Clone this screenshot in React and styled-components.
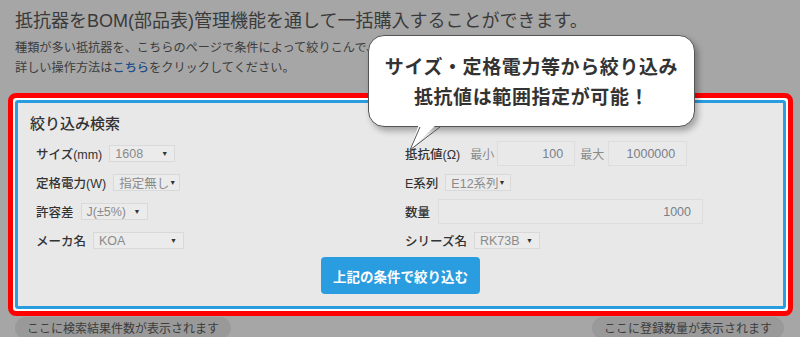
import React from "react";
import styled, { createGlobalStyle } from "styled-components";

const GlobalStyle = createGlobalStyle`
  html, body {
    margin: 0;
    padding: 0;
    background: #a6a6a6;
  }
  body {
    width: 800px;
    height: 337px;
    overflow: hidden;
    font-family: "Noto Sans CJK JP", sans-serif;
    color: #3a3a3a;
  }
`;

const leftRows = [
  { label: "サイズ(mm)", value: "1608", width: 66 },
  { label: "定格電力(W)", value: "指定無し", width: 67 },
  { label: "許容差", value: "J(±5%)", width: 67 },
  { label: "メーカ名", value: "KOA", width: 91 },
];

function App() {
  return (
    <>
      <GlobalStyle />
      <Page>
        <Heading>抵抗器をBOM(部品表)管理機能を通して一括購入することができます。</Heading>
        <Intro>
          種類が多い抵抗器を、こちらのページで条件によって絞りこんで、まとめて購入できます。
          <br />
          詳しい操作方法は<IntroLink>こちら</IntroLink>をクリックしてください。
        </Intro>

        <Highlight>
          <SearchPanel>
            <PanelTitle>絞り込み検索</PanelTitle>
            <FieldGrid>
              <Column>
                {leftRows.map((row) => (
                  <Row key={row.label}>
                    <Label>{row.label}</Label>
                    <Select width={row.width}>
                      <span>{row.value}</span>
                      <Arrow>▼</Arrow>
                    </Select>
                  </Row>
                ))}
              </Column>
              <Column>
                <Row>
                  <Label>抵抗値(Ω)</Label>
                  <SubLabel gap={10}>最小</SubLabel>
                  <NumberInput width={78} gap={3} readOnly value="100" />
                  <SubLabel gap={5}>最大</SubLabel>
                  <NumberInput width={79} gap={4} readOnly value="1000000" />
                </Row>
                <Row>
                  <Label>E系列</Label>
                  <Select width={66}>
                    <span>E12系列</span>
                    <Arrow>▼</Arrow>
                  </Select>
                </Row>
                <Row>
                  <Label>数量</Label>
                  <NumberInput width={265} gap={8} readOnly value="1000" />
                </Row>
                <Row>
                  <Label>シリーズ名</Label>
                  <Select width={66}>
                    <span>RK73B</span>
                    <Arrow>▼</Arrow>
                  </Select>
                </Row>
              </Column>
            </FieldGrid>
            <ButtonRow>
              <SearchButton>上記の条件で絞り込む</SearchButton>
            </ButtonRow>
          </SearchPanel>
        </Highlight>

        <StatusBar>
          <StatusPill>ここに検索結果件数が表示されます</StatusPill>
          <StatusPill>ここに登録数量が表示されます</StatusPill>
        </StatusBar>

        <Bubble>
          <BubbleText>
            サイズ・定格電力等から絞り込み
            <br />
            抵抗値は範囲指定が可能！
          </BubbleText>
          <BubbleTail width="40" height="36" viewBox="0 0 40 36">
            <polygon points="15,0 5,29 35,0" fill="#fff" />
            <polyline
              points="15,6 5,29 35,6"
              fill="none"
              stroke="#555"
              strokeWidth="1"
            />
          </BubbleTail>
        </Bubble>
      </Page>
    </>
  );
}

export default App;

const Page = styled.div`
  position: relative;
  width: 800px;
  height: 337px;
  box-sizing: border-box;
  padding: 8px 7px 0 8px;
`;

const Heading = styled.h1`
  margin: 0;
  padding-left: 7px;
  font-family: "Liberation Sans", "Noto Sans CJK JP", sans-serif;
  font-size: 18px;
  line-height: 26px;
  font-weight: 400;
  color: #3a3a3a;
  white-space: nowrap;
`;

const Intro = styled.p`
  margin: 3px 0 0;
  padding-left: 7px;
  font-size: 12.2px;
  line-height: 20px;
  color: #3c3c3c;
  white-space: nowrap;
`;

const IntroLink = styled.span`
  color: #1b4f8c;
  font-weight: 500;
`;

const Highlight = styled.div`
  margin-top: 16px;
  width: 785px;
  box-sizing: border-box;
  border: 5px solid #ff0000;
  border-radius: 8px;
  padding: 2px;
  background: #ffffff;
`;

const SearchPanel = styled.div`
  border: 3px solid #2a9de0;
  border-radius: 3px;
  background: #e8e8e8;
  padding: 10px 0 12px 12px;
`;

const PanelTitle = styled.div`
  font-size: 15px;
  line-height: 20px;
  font-weight: 500;
  color: #333;
`;

const FieldGrid = styled.div`
  display: grid;
  grid-template-columns: 369px 1fr;
  margin: 6px 0 0 6px;
`;

const Column = styled.div`
  display: flex;
  flex-direction: column;
`;

const Row = styled.div`
  display: flex;
  align-items: center;
  height: 29px;
  gap: 7px;
`;

const Label = styled.span`
  font-family: "Liberation Sans", "Noto Sans CJK JP", sans-serif;
  font-size: 12.5px;
  font-weight: 500;
  color: #333;
  white-space: nowrap;
`;

const SubLabel = styled.span`
  font-size: 12px;
  color: #8a8a8a;
  margin-left: ${(p) => p.gap - 7}px;
  white-space: nowrap;
`;

const Select = styled.div`
  display: flex;
  align-items: center;
  justify-content: space-between;
  width: ${(p) => p.width}px;
  height: 17px;
  box-sizing: border-box;
  border: 1px solid #d9d9d9;
  background: #ebebeb;
  padding: 0 6px 0 5px;
  font-family: "Liberation Sans", "Noto Sans CJK JP", sans-serif;
  font-size: 12.5px;
  color: #8a8a8a;
  white-space: nowrap;
`;

const Arrow = styled.span`
  font-size: 7px;
  color: #333;
`;

const NumberInput = styled.input`
  width: ${(p) => p.width}px;
  height: 25px;
  box-sizing: border-box;
  margin-left: ${(p) => p.gap - 7}px;
  border: 1px solid #dddddd;
  background: #e9e9e9;
  padding: 0 11px 0 0;
  text-align: right;
  font-family: "Liberation Sans", sans-serif;
  font-size: 12.5px;
  color: #7a7f8a;
  outline: none;
`;

const ButtonRow = styled.div`
  display: flex;
  justify-content: center;
  margin: 2px 12px 0 0;
`;

const SearchButton = styled.button`
  width: 159px;
  height: 37px;
  border: none;
  border-radius: 4px;
  background: #2a9de0;
  color: #ffffff;
  font-family: "Noto Sans CJK JP", sans-serif;
  font-size: 13.5px;
  font-weight: 700;
  cursor: pointer;
`;

const StatusBar = styled.div`
  display: flex;
  justify-content: space-between;
  margin: 1px 9px 0 7px;
`;

const StatusPill = styled.div`
  padding: 0 12px;
  height: 22px;
  line-height: 21px;
  border-radius: 11px;
  background: #999999;
  font-size: 12px;
  color: #3c3c3c;
  white-space: nowrap;
`;

const Bubble = styled.div`
  position: absolute;
  left: 368px;
  top: 35px;
  width: 327px;
  height: 92px;
  box-sizing: border-box;
  border: 1px solid #555;
  border-radius: 16px;
  background: #ffffff;
  box-shadow: 3px 4px 6px rgba(0, 0, 0, 0.3);
  display: flex;
  align-items: center;
  justify-content: center;
`;

const BubbleText = styled.div`
  font-size: 19px;
  line-height: 30px;
  font-weight: 700;
  color: #333;
  text-align: center;
  letter-spacing: 0.6px;
  white-space: nowrap;
`;

const BubbleTail = styled.svg`
  position: absolute;
  left: 36px;
  top: 85px;
  overflow: visible;
`;
